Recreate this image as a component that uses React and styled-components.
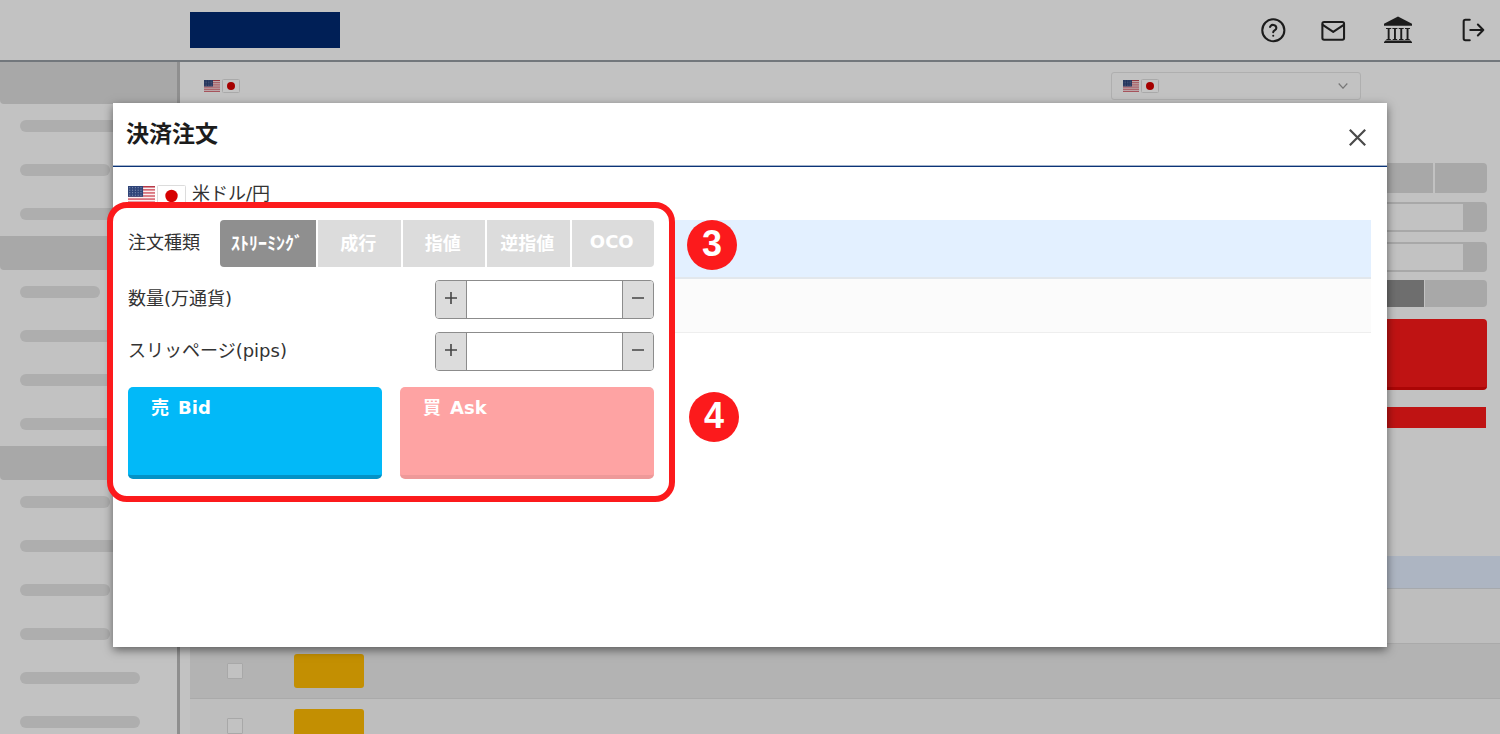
import React from "react";
import styled, { createGlobalStyle } from "styled-components";

const GlobalStyle = createGlobalStyle`
  *, *::before, *::after { box-sizing: border-box; }
  body {
    margin: 0;
    background: #c2c2c2;
    color: #333;
    font-family: "DejaVu Sans", "Noto Sans CJK JP", sans-serif;
    font-size: 18px;
  }
  button, input, select { font: inherit; color: inherit; margin: 0; }
  button { cursor: pointer; }
`;

/* ---------- page behind the dialog ---------- */

const Page = styled.div`
  position: relative;
  display: flex;
  flex-direction: column;
  height: 100vh;
  overflow: hidden;
`;

const Header = styled.header`
  display: flex;
  flex: none;
  align-items: center;
  justify-content: space-between;
  height: 62px;
  padding: 0 14px 0 190px;
  border-bottom: 2px solid #72777c;
`;

const Logo = styled.div`
  width: 150px;
  height: 36px;
  background: #001f56;
`;

const HeaderNav = styled.nav`
  display: grid;
  grid-template-columns: 60px 64px 76px 26px;
  align-items: center;
`;

const IconButton = styled.button`
  display: flex;
  justify-self: start;
  padding: 0;
  border: 0;
  background: none;
  color: #1c1c1c;
`;

const Body = styled.div`
  display: flex;
  flex: 1;
  min-height: 0;
`;

const Sidebar = styled.aside`
  flex: none;
  width: 180px;
  border-right: 3px solid #8f8f8f;
  overflow: hidden;
`;

const SectionHead = styled.div`
  height: ${(p) => (p.$tall ? 42 : 34)}px;
  border-radius: 0 0 0 4px;
  background: #a8a8a8;
`;

const SectionItems = styled.div`
  display: flex;
  flex-direction: column;
  gap: 32px;
  padding: 16px 20px;
`;

const ItemBar = styled.div`
  width: ${(p) => p.$width}px;
  height: 12px;
  border-radius: 6px;
  background: #aeaeae;
`;

const Main = styled.main`
  flex: 1;
  min-width: 0;
`;

const Toolbar = styled.div`
  display: flex;
  align-items: center;
  justify-content: space-between;
  padding: 10px 139px 0 24px;
`;

const PairPicker = styled.label`
  display: flex;
  align-items: center;
  width: 250px;
  height: 28px;
  padding: 0 12px 0 11px;
  border: 1px solid #afafaf;
  border-radius: 3px;
  color: #777;
`;

const PairSelect = styled.select`
  flex: 1;
  min-width: 0;
  height: 24px;
  border: 0;
  background: none;
  appearance: none;
  outline: none;
`;

const OrderPanel = styled.section`
  display: flex;
  flex-direction: column;
  width: 376px;
  margin: 63px 13px 128px auto;
`;

const PanelTabs = styled.div`
  display: grid;
  grid-template-columns: 1fr ${(p) => p.$last}px;
  gap: ${(p) => p.$gap}px;
  height: ${(p) => p.$height}px;
  margin-bottom: ${(p) => p.$after}px;
`;

const PanelTab = styled.button`
  border: 0;
  padding: 0;
  background: ${(p) => (p.$active ? "#6e6e6e" : "#a8a8a8")};
  &:last-child { border-radius: 0 4px 4px 0; }
`;

const PanelField = styled.div`
  display: flex;
  height: 30px;
  margin-bottom: ${(p) => p.$after}px;
  padding: 2px 24px 2px 24px;
  border-radius: 4px;
  background: #a8a8a8;
`;

const PanelInput = styled.input`
  flex: 1;
  min-width: 0;
  border: 0;
  padding: 0 8px;
  background: #c2c2c2;
`;

const PanelSubmit = styled.button`
  height: 71px;
  margin-bottom: 17px;
  border: 0;
  border-bottom: 3px solid #ab0606;
  border-radius: 4px;
  background: #bf1313;
`;

const PanelNotice = styled.div`
  height: 21px;
  margin-right: 1px;
  background: #bf1313;
`;

const OrdersTable = styled.table`
  width: calc(100% - 10px);
  margin-left: 10px;
  border-collapse: separate;
  border-spacing: 0;
  table-layout: fixed;
`;

const OrdersHead = styled.th`
  width: ${(p) => p.$width || "auto"};
  height: 33px;
  padding: 0;
  border-bottom: 1px solid #a6a9ad;
  background: #adb5c2;
`;

const OrdersCell = styled.td`
  height: 55px;
  padding: 0 0 0 ${(p) => p.$indent || 0}px;
  border-bottom: 1px solid #aaa;
  background: ${(p) => (p.$shaded ? "#b3b3b3" : "#bebebe")};
  line-height: 0;
`;

const RowCheck = styled.input`
  width: 16px;
  height: 16px;
  margin: 0;
  border: 1px solid #a8a8a8;
  border-radius: 1px;
  background: #c2c2c2;
  appearance: none;
`;

const RowAction = styled.button`
  width: 70px;
  height: 34px;
  padding: 0;
  border: 0;
  border-radius: 3px;
  background: #c38f02;
`;

/* ---------- flags ---------- */

const FlagPair = styled.span`
  display: flex;
  align-items: center;
  gap: 2px;
  ${(p) => p.$dim && "filter: brightness(0.77);"}
`;

function Flags({ large, dim }) {
  const w = large ? 27 : 16;
  const h = large ? 20 : 12;
  return (
    <FlagPair $dim={dim}>
      <svg width={w} height={h} viewBox="0 0 26 20" preserveAspectRatio="none" aria-hidden="true">
        <rect width="26" height="20" fill="#fbf0f1" />
        {[0, 1, 2, 3, 4, 5, 6].map((i) => (
          <rect key={i} y={i * 3.08} width="26" height="1.54" fill={i === 0 ? "#b83a48" : "#d4606c"} />
        ))}
        <rect width="14.5" height="10.8" fill="#2f4478" />
        {[0, 1, 2, 3].map((r) =>
          [0, 1, 2, 3, 4].map((c) => (
            <rect key={`${r}-${c}`} x={1.2 + c * 2.7} y={1.2 + r * 2.5} width="1" height="1" fill="#8c9abb" />
          ))
        )}
      </svg>
      <svg width={w + 2} height={h + 2} viewBox={`0 0 ${w + 2} ${h + 2}`} aria-hidden="true">
        <rect x="0.5" y="0.5" width={w + 1} height={h + 1} rx="1" fill="#fff" stroke="#dcdcdc" />
        <circle cx={(w + 2) / 2} cy={(h + 2) / 2} r={large ? 6.2 : 4} fill="#d60000" />
      </svg>
    </FlagPair>
  );
}

/* ---------- dialog ---------- */

const Overlay = styled.div`
  position: absolute;
  inset: 0;
  display: flex;
  align-items: flex-start;
  padding: 103px 113px 0;
`;

const Dialog = styled.section`
  flex: 1;
  min-width: 0;
  min-height: 544px;
  background: #fff;
  box-shadow: 0 3px 9px rgba(0, 0, 0, 0.5);
`;

const DialogHeader = styled.header`
  display: flex;
  align-items: center;
  justify-content: space-between;
  height: 64px;
  padding: 0 21px 2px 13px;
  border-bottom: 1px solid #0b3478;
  box-shadow: inset 0 -1px 0 #a3b3ca;
`;

const DialogTitle = styled.h1`
  margin: 0;
  color: #1c1c1c;
  font-size: 23px;
  line-height: 32px;
`;

const CloseButton = styled.button`
  display: flex;
  padding: 7px 0 0;
  border: 0;
  background: none;
  color: #4a4a4a;
`;

const DialogBody = styled.div`
  position: relative;
  padding: 16px 16px 0 15px;
`;

const PairLine = styled.div`
  display: flex;
  align-items: center;
  gap: 6px;
  height: 25px;
  margin-bottom: 12px;
  line-height: 20px;
`;

const PairName = styled.span`
  padding-bottom: 4px;
`;

const PositionsTable = styled.table`
  width: 100%;
  border-spacing: 0;
`;

const PositionsHead = styled.th`
  height: 59px;
  padding: 0;
  border-bottom: 2px solid #e2e7ec;
  background: #e3f0ff;
`;

const PositionsCell = styled.td`
  height: 54px;
  padding: 0;
  border-bottom: 1px solid #eee;
  background: #fbfbfb;
`;

const OrderForm = styled.form`
  position: absolute;
  top: 35px;
  left: -6px;
  width: 568px;
  padding: 12px 15px 17px;
  border: 6px solid #fc1a1c;
  border-radius: 20px;
  background: #fff;
`;

const FormRow = styled.div`
  display: flex;
  align-items: center;
  justify-content: space-between;
  margin-bottom: ${(p) => p.$after || 13}px;
`;

const FieldLabel = styled.label`
  padding-bottom: 2px;
  line-height: 24px;
`;

const TypeTabs = styled.div`
  display: grid;
  grid-template-columns: 96px repeat(4, 1fr);
  gap: 2px;
  width: 434px;
  height: 47px;
`;

const TypeTab = styled.button`
  padding: 0 2px 4px 0;
  border: 0;
  background: ${(p) => (p.$active ? "#8f8f8f" : "#dcdcdc")};
  color: #fff;
  font-weight: 700;
  white-space: nowrap;
  &:first-child { border-radius: 4px 0 0 4px; }
  &:last-child { border-radius: 0 4px 4px 0; }
`;

const Stepper = styled.div`
  display: grid;
  grid-template-columns: 30px 1fr 30px;
  width: 219px;
  height: 39px;
  border: 1px solid #8c8c8c;
  border-radius: 4px;
  overflow: hidden;
`;

const StepButton = styled.button`
  display: flex;
  align-items: center;
  justify-content: center;
  padding: 0 0 4px;
  border: 0;
  background: #dcdcdc;
  color: #444;
`;

const StepInput = styled.input`
  min-width: 0;
  padding: 0 8px;
  border: solid #8c8c8c;
  border-width: 0 1px;
  background: #fff;
  outline: none;
`;

const TradeButtons = styled.div`
  display: grid;
  grid-template-columns: 1fr 1fr;
  gap: 18px;
`;

const TradeButton = styled.button`
  display: flex;
  align-items: flex-start;
  gap: 9px;
  height: 92px;
  padding: 9px 23px;
  border: 0;
  border-bottom: 4px solid ${(p) => (p.$side === "bid" ? "#0392c6" : "#ee9999")};
  border-radius: 5px;
  background: ${(p) => (p.$side === "bid" ? "#02b9f8" : "#fea3a3")};
  color: #fff;
  font-weight: 700;
  line-height: 24px;
`;

const StepBadge = styled.span`
  position: absolute;
  top: ${(p) => p.$top}px;
  left: ${(p) => p.$left}px;
  width: 50px;
  height: 50px;
  border-radius: 50%;
  background: #fc1a1c;
  color: #fff;
  font-family: "Liberation Sans", Arial, sans-serif;
  font-size: 36px;
  font-weight: 700;
  line-height: 48px;
  text-align: center;
`;

/* ---------- icons ---------- */

const Stroked = ({ children, size = 26 }) => (
  <svg width={size} height={size} viewBox="0 0 24 24" fill="none" stroke="currentColor" strokeWidth="1.9"
    strokeLinecap="round" strokeLinejoin="round" aria-hidden="true">
    {children}
  </svg>
);

const HelpIcon = () => (
  <Stroked>
    <circle cx="12.3" cy="12.2" r="10.2" />
    <path d="M9.3 9.2a3 3 0 0 1 5.8 1c0 2-2.900 2.300-2.900 3.800" />
    <path d="M12.2 17.300h.01" />
  </Stroked>
);

const MailIcon = () => (
  <Stroked>
    <rect x="2.200" y="4.700" width="20" height="16.300" rx="1.600" />
    <path d="M2.500 7.200 12.200 13.800l9.700-6.600" />
  </Stroked>
);

const BankIcon = () => (
  <svg width="28" height="28" viewBox="0 0 28 28" fill="currentColor" aria-hidden="true">
    <path d="M14 .5 28 7.800V9.800H0V7.800Z" />
    <path d="M2 12h5.200v1H5.600v10h1.200v1H2.400v-1h1.300V13H2zM8.400 12h5v1h-1.500v10h1.300v1H8.700v-1H10V13H8.400zM14.700 12h5v1h-1.500v10h1.300v1H15v-1h1.300V13h-1.600zM21 12h5v1h-1.500v10h1.200v1h-4.400v-1h1.300V13H21z" />
    <path d="M1.500 24.500h25L28 26v1H0v-1z" />
  </svg>
);

const LogoutIcon = () => (
  <Stroked>
    <path d="M9 21.500H5a1.600 1.600 0 0 1-1.600-1.600V4.200A1.600 1.600 0 0 1 5 2.600h4" />
    <path d="m16.500 17 5-5-5-5M21.500 12H9.500" />
  </Stroked>
);

const ChevronIcon = () => (
  <svg width="10" height="6" viewBox="0 0 10 6" fill="none" stroke="currentColor" strokeWidth="1.200" aria-hidden="true">
    <path d="M.7.5 5 5.200 9.300.5" />
  </svg>
);

const CloseIcon = () => (
  <svg width="17" height="17" viewBox="0 0 17 17" fill="none" stroke="currentColor" strokeWidth="2.200" aria-hidden="true">
    <path d="m.8.8 15.400 15.400M16.200.8.8 16.200" />
  </svg>
);

const SignIcon = ({ plus }) => (
  <svg width="12" height="12" viewBox="0 0 12 12" stroke="currentColor" strokeWidth="1.600" aria-hidden="true">
    <path d={plus ? "M0 6h12M6 0v12" : "M0 6h12"} />
  </svg>
);

/* ---------- page ---------- */

const sections = [
  { tall: true, bars: [120, 90, 120] },
  { bars: [80, 120, 120, 120] },
  { bars: [90, 120, 90, 90, 120, 120] },
];

const orderTypes = ["ｽﾄﾘｰﾐﾝｸﾞ", "成行", "指値", "逆指値", "OCO"];

function StepperField({ id, label, after }) {
  return (
    <FormRow $after={after}>
      <FieldLabel htmlFor={id}>{label}</FieldLabel>
      <Stepper>
        <StepButton type="button" aria-label="増やす"><SignIcon plus /></StepButton>
        <StepInput id={id} type="text" inputMode="decimal" />
        <StepButton type="button" aria-label="減らす"><SignIcon /></StepButton>
      </Stepper>
    </FormRow>
  );
}

export default function App() {
  return (
    <Page>
      <GlobalStyle />
      <Header>
        <Logo />
        <HeaderNav>
          <IconButton type="button" aria-label="ヘルプ"><HelpIcon /></IconButton>
          <IconButton type="button" aria-label="メール"><MailIcon /></IconButton>
          <IconButton type="button" aria-label="入出金"><BankIcon /></IconButton>
          <IconButton type="button" aria-label="ログアウト"><LogoutIcon /></IconButton>
        </HeaderNav>
      </Header>

      <Body>
        <Sidebar>
          {sections.map((section, i) => (
            <div key={i}>
              <SectionHead $tall={section.tall} />
              <SectionItems>
                {section.bars.map((width, j) => <ItemBar key={j} $width={width} />)}
              </SectionItems>
            </div>
          ))}
        </Sidebar>

        <Main>
          <Toolbar>
            <Flags dim />
            <PairPicker>
              <Flags dim />
              <PairSelect aria-label="通貨ペア" />
              <ChevronIcon />
            </PairPicker>
          </Toolbar>

          <OrderPanel>
            <PanelTabs $last={52} $gap={2} $height={30} $after={9}>
              <PanelTab type="button" aria-label="注文方法" />
              <PanelTab type="button" aria-label="注文方法" />
            </PanelTabs>
            <PanelField $after={10}><PanelInput aria-label="数量" /></PanelField>
            <PanelField $after={8}><PanelInput aria-label="スリッページ" /></PanelField>
            <PanelTabs $last={62} $gap={1} $height={27} $after={12}>
              <PanelTab type="button" $active aria-label="両建なし" />
              <PanelTab type="button" aria-label="両建あり" />
            </PanelTabs>
            <PanelSubmit type="button" aria-label="買" />
            <PanelNotice />
          </OrderPanel>

          <OrdersTable>
            <thead>
              <tr>
                <OrdersHead $width="104px" />
                <OrdersHead />
              </tr>
            </thead>
            <tbody>
              {[false, true, false].map((shaded, i) => (
                <tr key={i}>
                  <OrdersCell $shaded={shaded} $indent={37}>
                    <RowCheck type="checkbox" aria-label="選択" />
                  </OrdersCell>
                  <OrdersCell $shaded={shaded}>
                    <RowAction type="button" aria-label="決済" />
                  </OrdersCell>
                </tr>
              ))}
            </tbody>
          </OrdersTable>
        </Main>
      </Body>

      <Overlay>
        <Dialog role="dialog" aria-labelledby="dialog-title">
          <DialogHeader>
            <DialogTitle id="dialog-title">決済注文</DialogTitle>
            <CloseButton type="button" aria-label="閉じる"><CloseIcon /></CloseButton>
          </DialogHeader>
          <DialogBody>
            <PairLine>
              <Flags large />
              <PairName>米ドル/円</PairName>
            </PairLine>
            <PositionsTable>
              <thead><tr><PositionsHead /></tr></thead>
              <tbody><tr><PositionsCell /></tr></tbody>
            </PositionsTable>

            <OrderForm onSubmit={(e) => e.preventDefault()}>
              <FormRow>
                <FieldLabel as="span">注文種類</FieldLabel>
                <TypeTabs>
                  {orderTypes.map((type, i) => (
                    <TypeTab key={type} type="button" $active={i === 0}>{type}</TypeTab>
                  ))}
                </TypeTabs>
              </FormRow>
              <StepperField id="quantity" label="数量(万通貨)" />
              <StepperField id="slippage" label="スリッページ(pips)" after={16} />
              <TradeButtons>
                <TradeButton type="button" $side="bid"><span>売</span><span>Bid</span></TradeButton>
                <TradeButton type="button" $side="ask"><span>買</span><span>Ask</span></TradeButton>
              </TradeButtons>
              <StepBadge $top={12} $left={574}>3</StepBadge>
              <StepBadge $top={184} $left={576}>4</StepBadge>
            </OrderForm>
          </DialogBody>
        </Dialog>
      </Overlay>
    </Page>
  );
}
